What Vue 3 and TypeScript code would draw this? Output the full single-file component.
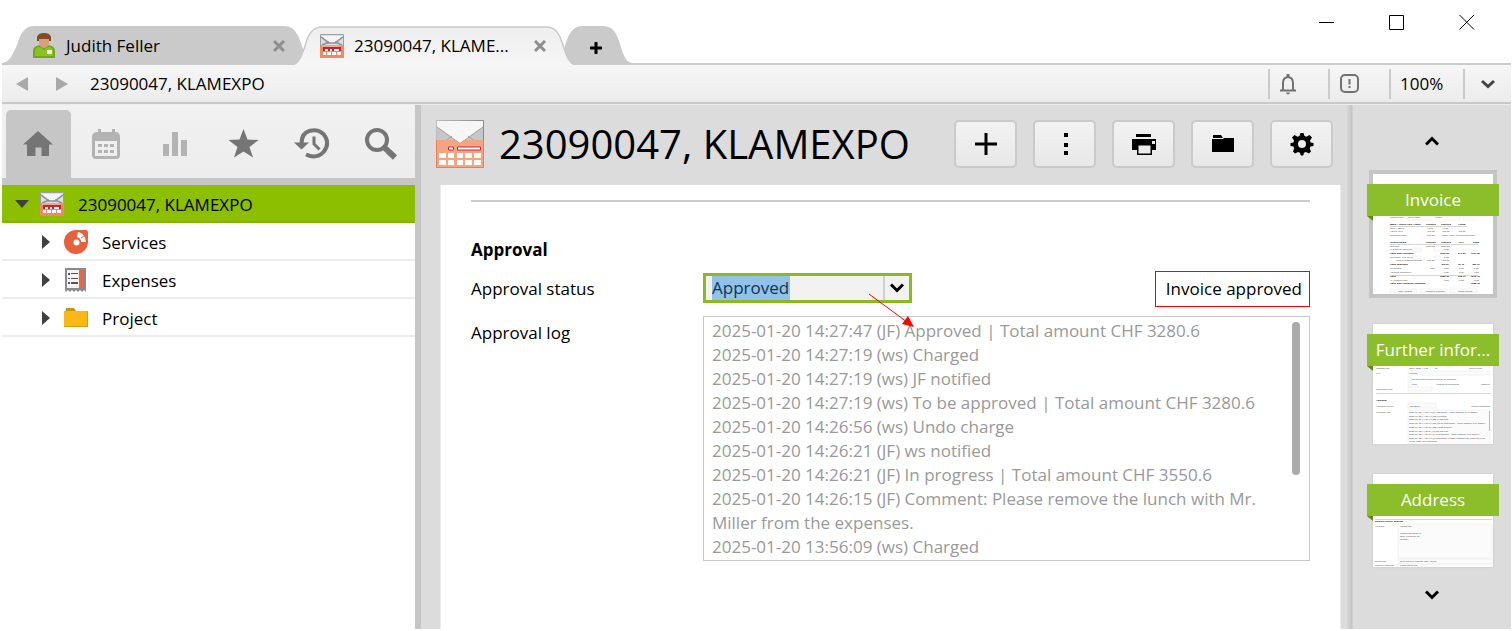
<script setup lang="ts">
import { ref } from 'vue'

interface NavTool { id: string; label: string; active?: boolean; faint?: boolean }
interface TreeItem { id: string; label: string }
interface Cell { x: number; y: number; t: string; b?: boolean }
interface Page { id: string; label: string; active?: boolean; height: number; cells: Cell[]; lines: number[][]; boxes: number[][] }

const record = '23090047, KLAMEXPO'
const status = ref('Approved')

const tools: NavTool[] = [
  { id: 'home', label: 'Home', active: true },
  { id: 'calendar', label: 'Calendar', faint: true },
  { id: 'chart', label: 'Reports', faint: true },
  { id: 'star', label: 'Favourites' },
  { id: 'history', label: 'History' },
  { id: 'search', label: 'Search' },
]

const tree: TreeItem[] = [
  { id: 'services', label: 'Services' },
  { id: 'expenses', label: 'Expenses' },
  { id: 'project', label: 'Project' },
]

const actions = [
  { id: 'add', label: 'Add' },
  { id: 'more', label: 'More' },
  { id: 'print', label: 'Print' },
  { id: 'folder', label: 'Folder' },
  { id: 'settings', label: 'Settings' },
]

const log = [
  '2025-01-20 14:27:47 (JF) Approved | Total amount CHF 3280.6',
  '2025-01-20 14:27:19 (ws) Charged',
  '2025-01-20 14:27:19 (ws) JF notified',
  '2025-01-20 14:27:19 (ws) To be approved | Total amount CHF 3280.6',
  '2025-01-20 14:26:56 (ws) Undo charge',
  '2025-01-20 14:26:21 (JF) ws notified',
  '2025-01-20 14:26:21 (JF) In progress | Total amount CHF 3550.6',
  '2025-01-20 14:26:15 (JF) Comment: Please remove the lunch with Mr. Miller from the expenses.',
  '2025-01-20 13:56:09 (ws) Charged',
]

const row = (y: number, label: string, values: [number, string][], b = false): Cell[] => [
  { x: 17, y, t: label, b },
  ...values.map(([x, t]) => ({ x, y, t, b })),
]

const pages: Page[] = [
  {
    id: 'invoice', label: 'Invoice', active: true, height: 120,
    cells: [
      ...row(44, 'Invoice date', [[35, '20.01.2025'], [62, 'Term 1']]),
      ...row(51, 'Basis / Hourly rate / costs', [[53, 'Planned'], [68, 'Charged'], [85, 'Actual']], true),
      ...row(55, 'Total / hours', [[54, '17.00'], [69, '17.00']]),
      ...row(58, 'Hourly rate', [[54, '180.00'], [69, '180.00'], [85, '180.00']]),
      ...row(62, 'Recorded costs', [[54, '270.00'], [69, 'Basis: 100% of recorded costs']]),
      ...row(69, 'Invoice totals', [[53, 'Planned'], [68, 'Charged'], [86, 'VAT'], [100, 'Total']], true),
      ...row(73, 'Services', [[53, '3060.00'], [68, '3060.00']]),
      ...row(76, '% Discount Services', [[71, '0.00']]),
      ...row(80, 'Total after discount', [[67, '3060.00'], [85, '247.86'], [98, '3307.86']], true),
      ...row(84, 'Expenses   Flat fee %', [[71, '0.00']]),
      ...row(87, '          Total expenses and fee', [[54, '270.00'], [69, '450.00']]),
      ...row(91, 'Total expenses', [[68, '450.00'], [85, '36.45'], [99, '486.45']], true),
      ...row(95, 'Purchases', [[57, '0.00'], [71, '0.00'], [86, '0.00'], [101, '0.00']]),
      ...row(99, 'Advance payments', [[71, '0.00'], [86, '0.00'], [101, '0.00']]),
      ...row(103, 'Total', [[67, '3280.60'], [85, '265.73'], [98, '3546.33']], true),
      ...row(107, '% Advance paid', [[71, '0.00'], [86, '0.00'], [101, '0.00']]),
      ...row(110, 'Total after advance (rounded)', [[98, '3280.60']], true),
      { x: 25, y: 118, t: 'Copy invoice' }, { x: 53, y: 118, t: 'Remove charged' }, { x: 85, y: 118, t: 'Undo charge' },
    ],
    lines: [[17, 52, 94], [17, 70, 105], [17, 101, 105]],
    boxes: [[34, 41, 24, 5], [73, 41, 14, 5], [90, 41, 14, 5], [61, 71, 14, 6], [40, 74, 8, 4], [40, 82, 8, 4], [61, 82, 14, 4], [17, 115, 27, 4], [47, 115, 27, 4], [77, 115, 27, 4]],
  },
  {
    id: 'further', label: 'Further infor...', height: 120,
    cells: [
      { x: 3, y: 45, t: 'Changed on' }, { x: 36, y: 45, t: '20.01.2025 14:28' }, { x: 62, y: 45, t: 'By' }, { x: 96, y: 45, t: 'Judith Feller' },
      { x: 3, y: 50, t: 'VAT' }, { x: 36, y: 50, t: 'Normal' },
      { x: 39, y: 56, t: 'Do not send invoice (cannot be booked)' },
      { x: 39, y: 61, t: 'Paid' }, { x: 63, y: 61, t: 'Amount outstanding' }, { x: 108, y: 61, t: '3280.60' },
      { x: 3, y: 66, t: 'Reminder level' },
      { x: 3, y: 77, t: 'Approval', b: true },
      { x: 3, y: 83, t: 'Approval status' }, { x: 36, y: 83, t: 'Approved' }, { x: 98, y: 83, t: 'Invoice approved' },
      { x: 3, y: 89, t: 'Approval log' },
      ...log.slice(0, 8).map((t, i) => ({ x: 36, y: 89 + Math.round(i * 3.7), t: t.split(' Miller')[0] })),
      { x: 36, y: 118, t: 'Miller from the expenses.' },
    ],
    lines: [[3, 69, 118]],
    boxes: [[35, 47, 82, 4], [35, 53, 4, 4], [35, 58, 4, 4], [35, 63, 24, 4], [35, 79, 28, 5], [35, 86, 82, 38]],
  },
  {
    id: 'address', label: 'Address', height: 93,
    cells: [
      { x: 2, y: 48, t: 'Default invoice address', b: true },
      { x: 2, y: 53, t: 'Address' }, { x: 27, y: 53, t: 'Klamexpo' },
      { x: 27, y: 60, t: 'Gewerbestrasse 15' }, { x: 27, y: 63, t: '8021 Neustadt ZH' }, { x: 27, y: 66, t: 'Schweiz' },
      { x: 2, y: 88, t: 'Salutation' }, { x: 27, y: 88, t: 'Sehr geehrte Damen und Herren' },
      { x: 2, y: 92, t: 'Contact Partners' }, { x: 27, y: 92, t: 'Finanzabteilung' },
    ],
    lines: [[2, 45, 119]],
    boxes: [[25, 50, 94, 34], [25, 85, 94, 5], [25, 90, 94, 5]],
  },
]
</script>

<template>
  <div class="app">
    <header class="tabstrip">
      <nav class="tabs" aria-label="Open tabs">
        <div class="tab tab-user">
          <svg class="tab-shape" viewBox="0 0 308 39" aria-hidden="true">
            <path fill="#cacaca" d="M0 37 C7 37 11 28 15 19 C18 9 22 0 32 0 H283 C294 0 298 13 302 26 C300 34 296 39 290 39 H0Z" />
          </svg>
          <svg class="user-icon" viewBox="0 0 24 26" aria-hidden="true">
            <path fill="#72a71d" d="M1 25v-7q0-5 7-6h8q7 1 7 6v7z" />
            <path fill="#8cc21f" d="M3 23v-4q0-5 5-5l4 3 4-3q5 0 5 5v4z" />
            <path fill="#d99f80" d="M7 4h10v7q-1 3-5 4-4-1-5-4z" />
            <path fill="#824c22" d="M5 8V4q1-4 7-4t7 4v4h-2V6H7v2z" />
            <path fill="#f5e9df" d="M15 17h5v4h-5z" />
          </svg>
          <a class="tab-label" href="#">Judith Feller</a>
          <button class="tab-close" aria-label="Close Judith Feller"><svg viewBox="0 0 12 12"><path d="M1 1l10 10M11 1L1 11" /></svg></button>
        </div>
        <div class="tab tab-record">
          <svg class="tab-shape" viewBox="0 0 288 39" aria-hidden="true">
            <defs><linearGradient id="tabfill" x2="0" y2="1"><stop stop-color="#eeeeee" /><stop offset="1" stop-color="#f6f6f6" /></linearGradient></defs>
            <path fill="url(#tabfill)" d="M2 39 C9 38 12 29 15 20 C18 9 22 1 32 1 H256 C267 1 270 10 273 19 C276 29 279 38 286 39Z" />
            <path fill="none" stroke="#c9c9c9" stroke-width="1.5" d="M2 39 C9 38 12 29 15 20 C18 9 22 1 32 1 H256 C267 1 270 10 273 19 C276 29 279 38 286 39" />
          </svg>
          <svg class="small-invoice" aria-hidden="true"><use href="#invoice-small" /></svg>
          <a class="tab-label" href="#">23090047, KLAME...</a>
          <button class="tab-close" aria-label="Close 23090047, KLAMEXPO"><svg viewBox="0 0 12 12"><path d="M1 1l10 10M11 1L1 11" /></svg></button>
        </div>
        <button class="tab-new" aria-label="New tab">
          <svg class="tab-shape" viewBox="0 0 68 39" aria-hidden="true">
            <path fill="#cacaca" d="M12 39 C5 37 3 31 0 24 C3 13 6 0 19 0 H39 C50 0 53 9 56 18 C59 28 62 37 68 37 V39Z" />
          </svg>
          <svg class="plus" viewBox="0 0 12 12" aria-hidden="true"><path d="M6 1v10M1 6h10" /></svg>
        </button>
      </nav>
      <div class="window-controls">
        <button aria-label="Minimize"><svg viewBox="0 0 16 16"><path d="M0 8.5h15" /></svg></button>
        <button aria-label="Maximize"><svg viewBox="0 0 16 16"><path d="M.5 1.5h14v14H.5z" /></svg></button>
        <button aria-label="Close"><svg viewBox="0 0 16 16"><path d="M.5 1l14.500 14.500M15 1L.5 15.500" /></svg></button>
      </div>
    </header>

    <div class="toolbar">
      <button class="step" aria-label="Back"><svg viewBox="0 0 12 14"><path d="M12 0v14L0 7z" /></svg></button>
      <button class="step" aria-label="Forward"><svg viewBox="0 0 12 14"><path d="M0 0v14l12-7z" /></svg></button>
      <span class="crumb">{{ record }}</span>
      <div class="toolbar-right">
        <button class="bell" aria-label="Notifications">
          <svg viewBox="0 0 20 22"><path d="M5 17V10q0-5.500 5-6 5 .5 5 6v7M2 17.500h16" /><path class="solid" d="M8.500 1h3v3h-3zM8 19.500h4q-.5 2-2 2t-2-2z" /></svg>
        </button>
        <button class="alert" aria-label="Messages">
          <svg viewBox="0 0 20 20"><rect x="1" y="1" width="17" height="17" rx="4" /><path d="M9.500 5v5.500M9.500 12v2" /></svg>
        </button>
        <button class="zoom">100%</button>
        <button class="drop" aria-label="More options"><svg viewBox="0 0 14 10"><path d="M1 2l6 5.500L13 2" /></svg></button>
      </div>
    </div>

    <div class="body">
      <aside class="sidebar">
        <nav class="tools" aria-label="Views">
          <button v-for="t in tools" :key="t.id" :class="{ active: t.active, faint: t.faint }" :aria-label="t.label">
            <svg viewBox="0 0 36 32">
              <path v-if="t.id === 'home'" d="M18 3l15 13.500h-4V28h-7.500v-8.500h-6V28H7V16.500H3z" />
              <template v-else-if="t.id === 'calendar'">
                <path fill-rule="evenodd" d="M9 1h3v3h11V1h3v3q5 0 5 5v18q0 4-4 4H7q-4 0-4-4V9q0-5 6-5zM6 13v15h22V13z" />
                <path d="M9 16h4v3H9zm6 0h4v3h-4zm6 0h4v3h-4zM9 22h4v3H9zm6 0h4v3h-4zm6 0h4v3h-4z" />
              </template>
              <path v-else-if="t.id === 'chart'" d="M6 16h6v12H6zm9-12h6v24h-6zm9 8h6v16h-6z" />
              <path v-else-if="t.id === 'star'" d="M17.500 1l4 10.500 11 .5-9 7L27 29.500l-9.500-6L8 29.500 11.500 19l-9-7 11-.5z" />
              <template v-else-if="t.id === 'history'">
                <path class="line thick" d="M7.500 15.500Q7.500 5 16 2.800 26.500.5 31.500 9q4 8-2 15-7 7.500-17.500 2.500" />
                <path d="M0 14.500h15l-7.500 7z" /><path class="line" d="M20 8.500V16l5.500 5.500" />
              </template>
              <template v-else>
                <circle class="line thick" cx="14" cy="12" r="10" /><path class="handle" d="M22 20l3 3M25 23l7 6.500" />
              </template>
            </svg>
          </button>
        </nav>
        <ul class="tree">
          <li>
            <a class="node root" href="#">
              <svg class="caret down" viewBox="0 0 14 8" aria-hidden="true"><path d="M0 0h14L7 8z" /></svg>
              <svg class="small-invoice" viewBox="0 0 24 24" aria-hidden="true">
                <g id="invoice-small">
                  <path fill="#dcdee1" d="M0 0h24v12H0z" /><path fill="#f5f5f6" d="M2 2h20L12 10z" />
                  <path fill="none" stroke="#999fa2" d="M.5 11V.5h23V11" />
                  <path fill="none" stroke="#8b9294" stroke-width="1.500" d="M1 3l8 6h6l8-6M2 11l7-3M22 11l-7-3" />
                  <path fill="#ef8863" d="M0 11h24v13H0z" /><path fill="#f6a585" d="M2 11h20l-3 2H2z" />
                  <path fill="#c92331" d="M3 13h18v4h-2v-2h-5v2h-2v-2h-2v2H8v-2H5v2H3z" />
                  <path fill="#fff" d="M5 15h3v2H5zm5 0h2v2h-2zm4 0h5v2h-5zM3 18h3v3H3zm4 0h4v3H7zm5 0h4v3h-4zm5 0h4v3h-4z" />
                </g>
              </svg>
              <span>{{ record }}</span>
            </a>
          </li>
          <li v-for="n in tree" :key="n.id">
            <a class="node" href="#">
              <svg class="caret" viewBox="0 0 8 14" aria-hidden="true"><path d="M0 0v14l8-7z" /></svg>
              <svg class="tree-icon" viewBox="0 0 24 24" aria-hidden="true">
                <template v-if="n.id === 'services'">
                  <circle cx="12" cy="12" r="12" fill="#e5623d" />
                  <path fill="#e5623d" d="M13 0h9q2 0 2 3v10H13z" />
                  <path fill="#fff" d="M14 2q7 1 8 10h-5q0-4-4-5z" />
                  <path fill="none" stroke="#e5623d" d="M17 8l4-3" />
                  <circle cx="12.500" cy="12.500" r="3" fill="#fff" />
                </template>
                <template v-else-if="n.id === 'expenses'">
                  <path fill="#8a8a8a" d="M1 0h21v24l-2-2-2 2-2-2-2 2-2-2-2 2-2-2-2 2-2-2-2 2-1-2z" />
                  <path fill="#f4f4f4" d="M3 2h12v18H3z" /><path fill="#ea6745" d="M15 1h5v19h-5z" />
                  <path fill="#555" d="M4 5h2v2H4zm3 0h7v1H7zm-3 5h2v1H4zm3 0h7v1H7zm-3 4h2v2H4zm3 0h7v2H7z" />
                </template>
                <template v-else>
                  <path fill="#c99512" d="M2 2h8l2 3v3H1z" /><path fill="#fbb815" d="M0 5h24v16H0z" />
                  <path fill="#d69c12" d="M0 20h24v1H0zM23 5h1v16h-1z" />
                </template>
              </svg>
              <span>{{ n.label }}</span>
            </a>
          </li>
        </ul>
      </aside>

      <main class="main">
        <div class="heading">
          <svg class="invoice-large" viewBox="0 0 48 48" aria-hidden="true">
            <defs><linearGradient id="rim"><stop stop-color="#b9bbbc" /><stop offset="1" stop-color="#888b8d" /></linearGradient></defs>
            <path fill="#c5c7c9" d="M0 0h48v21H0z" /><path fill="#f6f6f6" d="M1 1h46v6L24 23.500 1 7z" />
            <path fill="none" stroke="#9d9fa1" d="M1 7l23 16.500L47 7M16 16l-6 5M32 16l6 5" />
            <path fill="#f5a482" d="M0 20h19.500l4.500 3.500 4.500-3.500H48v28H0z" />
            <path fill="none" stroke="url(#rim)" d="M.5 20V.5h47V20" />
            <path fill="none" stroke="#ed7f58" d="M.5 20v27.500h47V20" />
            <path fill="#fff" stroke="#d62338" d="M12.500 27h5v3h-5zM21.500 27h23v3h-23z" />
            <path fill="#fff" d="M3 33h7v5H3zm9 0h6v5h-6zm9 0h6v5h-6zm8 0h7v5h-7zm9 0h7v5h-7zM3 40h7v5H3zm9 0h6v5h-6zm9 0h6v5h-6zm8 0h7v5h-7zm9 0h7v5h-7z" />
          </svg>
          <h1>{{ record }}</h1>
          <div class="actions">
            <button v-for="a in actions" :key="a.id" :aria-label="a.label">
              <svg viewBox="0 0 24 24">
                <path v-if="a.id === 'add'" d="M10.500 1h3v9.500H23v3h-9.500V23h-3v-9.500H1v-3h9.500z" />
                <path v-else-if="a.id === 'more'" d="M11 1h4v4h-4zm0 10h4v4h-4zm0 8h4v4h-4z" />
                <path v-else-if="a.id === 'print'" fill-rule="evenodd" d="M4 2h15v3H4zM0 7h24v11h-4v5H5v-5H0zm20 2v3h3V9zM6.500 13.500v8h12v-8z" />
                <path v-else-if="a.id === 'folder'" d="M2 3h8l2 3H2zM1 7h11l1-1h10v14H1z" />
                <path v-else fill-rule="evenodd" d="M10.500 1h3l1 3 2 .8L19.500 3 22 5.500 20 8.500l.5 2 3 .5v3l-3 .5-.7 2L21 19.500 19 21.500l-3-1.500-2 .8-.8 2.700h-2.400L10 20.800 8 20l-3 1.500L3 19.500l1.200-3-.7-2-3-.5v-3l3-.5.5-2L2 5.500 4.500 3l3 1.800 2-.8zM12 8a4 4 0 100 8 4 4 0 000-8z" />
              </svg>
            </button>
          </div>
        </div>

        <form class="panel" @submit.prevent>
          <hr />
          <h2>Approval</h2>
          <div class="field">
            <label for="status">Approval status</label>
            <div class="status-row">
              <div class="combo">
                <select id="status" v-model="status">
                  <option>Approved</option>
                  <option>In progress</option>
                  <option>To be approved</option>
                </select>
                <span class="combo-arrow"><svg viewBox="0 0 14 10" aria-hidden="true"><path d="M1 1.500l6 6 6-6" /></svg></span>
                <svg class="pointer" viewBox="0 0 48 36" aria-hidden="true">
                  <path d="M1 1l38 28" fill="none" stroke="#f00" /><path d="M46 34L34 31l6-8z" fill="#f00" />
                </svg>
              </div>
              <output for="status">Invoice approved</output>
            </div>
          </div>
          <div class="field log-field">
            <label for="log">Approval log</label>
            <div class="log">
              <textarea id="log" readonly :value="log.join('\n')"></textarea>
              <span class="thumb"></span>
            </div>
          </div>
        </form>
      </main>

      <nav class="pages" aria-label="Pages">
        <button class="scroll" aria-label="Scroll up"><svg viewBox="0 0 14 10"><path d="M1 8.500l6-6 6 6" /></svg></button>
        <a v-for="p in pages" :key="p.id" href="#" class="page" :class="{ current: p.active }">
          <svg class="preview" :viewBox="`0 0 120 ${p.height}`" aria-hidden="true">
            <g fill="#fbfbfb" stroke="#e6e6e6" stroke-width=".5">
              <rect v-for="(b, i) in p.boxes" :key="i" :x="b[0]" :y="b[1]" :width="b[2]" :height="b[3]" />
            </g>
            <path v-for="(l, i) in p.lines" :key="i" :d="`M${l[0]} ${l[1]}.5H${l[2]}`" stroke="#d5d5d5" />
            <path v-if="p.id === 'further'" d="M116.500 87v20" stroke="#bbb" />
            <text v-for="(c, i) in p.cells" :key="i" :x="c.x" :y="c.y" :class="{ strong: c.b }">{{ c.t }}</text>
          </svg>
          <span class="ribbon">{{ p.label }}</span>
        </a>
        <button class="scroll end" aria-label="Scroll down"><svg viewBox="0 0 14 10"><path d="M1 1.500l6 6 6-6" /></svg></button>
      </nav>
    </div>
  </div>
</template>

<style>
body { margin: 0; background: #fff; }
</style>

<style scoped>
.app {
  box-sizing: border-box;
  display: flex;
  flex-direction: column;
  min-height: 100vh;
  padding: 0 1px 2px 2px;
  font-family: "Open Sans", "Noto Sans", sans-serif;
  font-size: 17px;
  line-height: 24px;
  color: #000;
}
button { padding: 0; border: 0; background: none; font: inherit; color: inherit; }
a { color: inherit; text-decoration: none; }
svg { display: block; flex: none; }

.tabstrip {
  display: flex;
  justify-content: space-between;
  align-items: flex-end;
  height: 65px;
  background: linear-gradient(#cacaca, #cacaca) bottom / 100% 2px no-repeat #fff;
}
.tabs { display: flex; height: 39px; }
.tab, .tab-new { position: relative; display: flex; align-items: center; height: 39px; box-sizing: border-box; }
.tab > *, .tab-new > * { position: relative; }
.tab > .tab-shape, .tab-new > .tab-shape { position: absolute; left: 0; top: 0; width: 100%; height: 39px; }
.tab-user { width: 308px; padding: 0 25px 0 30px; }
.tab-record { width: 288px; margin-left: -20px; padding: 0 32px 0 30px; z-index: 1; }
.tab-new { width: 68px; margin-left: -14px; }
.user-icon { width: 24px; height: 26px; margin-right: 10px; }
.small-invoice { width: 24px; height: 24px; }
.tab-record .small-invoice { margin-right: 10px; }
.tab-label { flex: 1; white-space: nowrap; }
.tab-close svg { width: 12px; height: 12px; fill: none; stroke: #8e8e8e; stroke-width: 3; }
.plus { width: 12px; height: 12px; margin: 4px 0 0 26px; fill: none; stroke: #000; stroke-width: 3; stroke-linecap: round; }
.window-controls { display: flex; align-self: flex-start; gap: 54px; padding: 14px 36px 0 0; }
.window-controls svg { width: 16px; height: 16px; fill: none; stroke: #000; }

.toolbar {
  display: flex;
  align-items: center;
  height: 37px;
  background: linear-gradient(#f6f6f6, #ececec);
  border-bottom: 2px solid #c8c8c8;
}
.step { margin-left: 14px; }
.step + .step { margin-left: 28px; }
.step svg { width: 12px; height: 14px; fill: #a9a9a9; }
.crumb { flex: 1; margin-left: 22px; }
.toolbar-right { display: flex; height: 30px; }
.toolbar-right button { display: flex; align-items: center; box-sizing: border-box; border-left: 2px solid #cbcbcb; }
.toolbar-right svg { fill: none; stroke: #727272; stroke-width: 2; }
.bell { width: 60px; padding-left: 8px; }
.bell svg { width: 20px; height: 22px; }
.bell .solid { fill: #727272; stroke: none; }
.alert { width: 61px; padding-left: 10px; }
.alert svg { width: 20px; height: 20px; }
.zoom { width: 74px; padding-left: 9px; }
.drop { width: 48px; padding-left: 16px; }
.drop svg { width: 14px; height: 10px; stroke: #444; stroke-width: 3; }

.body { flex: 1; display: flex; border-top: 1px solid #ededed; }
.sidebar { flex: none; width: 413px; border-right: 6px solid #c6c6c6; background: #fff; }
.tools {
  display: grid;
  grid-template-columns: repeat(6, 1fr);
  height: 73px;
  padding-left: 2px;
  background: linear-gradient(#f1f1f1, #ededed);
  border-bottom: 7px solid #c6c6c6;
}
.tools button { display: flex; align-items: center; justify-content: center; margin: 5px 2px 0; }
.tools .active { background: #c6c6c6; border-radius: 5px 5px 0 0; }
.tools svg { width: 36px; height: 32px; fill: #757575; }
.tools .faint svg { fill: #b3b3b3; }
.tools .line { fill: none; stroke: #757575; stroke-width: 3; }
.tools .thick { stroke-width: 4; }
.tools .handle { fill: none; stroke: #757575; stroke-width: 6; }
.tree { list-style: none; margin: 0; padding: 0; }
.node { display: flex; align-items: center; box-sizing: border-box; height: 38px; padding: 2px 0 0 40px; border-bottom: 2px solid #ededed; }
.node span { padding-top: 2px; }
.root { padding-left: 13px; background: #8cbf00; border-bottom-color: #82b400; }
.caret { width: 8px; height: 14px; fill: #404040; }
.caret.down { width: 14px; height: 8px; }
.tree-icon { width: 24px; height: 24px; margin: 0 14px; }
.root .small-invoice { margin: 0 14px 0 11px; }

.main { flex: 1; min-width: 0; display: flex; flex-direction: column; padding: 0 5px 0 19px; background: #dcdcdc; }
.heading { display: flex; align-items: center; height: 78px; margin: 0 0 2px -4px; }
.invoice-large { width: 48px; height: 48px; }
h1 { flex: 1; margin: 0 0 0 15px; font-size: 40px; line-height: 48px; font-weight: 400; white-space: nowrap; }
.actions { display: flex; gap: 16px; margin-right: 8px; }
.actions button {
  display: grid;
  place-items: center;
  box-sizing: border-box;
  width: 63px;
  height: 48px;
  border: 2px solid #cacaca;
  border-radius: 5px;
  background: linear-gradient(#f2f2f2, #e8e8e8);
}
.actions svg { width: 24px; height: 24px; }
.panel { flex: 1; padding: 15px 30px 0; background: #fff; border: 1px solid #ececec; border-width: 0 1px; }
hr { height: 2px; margin: 0; border: 0; background: #cbcbcb; }
h2 { margin: 36px 0 9px; font-size: 17px; line-height: 24px; font-weight: 700; }
.field { display: grid; grid-template-columns: 232px minmax(0, 1fr); align-items: center; }
.status-row { display: flex; justify-content: space-between; align-items: center; }
.combo { position: relative; width: 209px; height: 30px; margin-bottom: 2px; box-sizing: border-box; border: 3px solid #8cb91c; background: #f2f2f2; }
select {
  appearance: none;
  box-sizing: border-box;
  width: 100%;
  height: 24px;
  padding: 0 0 0 6px;
  border: 0;
  border-radius: 0;
  outline: 0;
  background: linear-gradient(#92c1e9, #92c1e9) 6px 0 / 78px 24px no-repeat #f2f2f2;
  font: inherit;
  color: #0b3656;
}
.combo-arrow {
  position: absolute;
  top: 0;
  right: 0;
  display: grid;
  place-items: center;
  width: 24px;
  height: 24px;
  border-left: 2px solid #d0d0d0;
  background: #f2f2f2;
  pointer-events: none;
}
.combo-arrow svg, .scroll svg { width: 14px; height: 10px; fill: none; stroke: #000; stroke-width: 3; }
.pointer { position: absolute; left: 162px; top: 17px; z-index: 1; width: 48px; height: 36px; pointer-events: none; }
output { box-sizing: border-box; height: 36px; padding: 5px 7px 5px 10px; border: 1px solid #f00; white-space: nowrap; }
.log-field { align-items: start; margin-top: 9px; }
.log-field label { padding-top: 5px; }
.log { position: relative; }
textarea {
  display: block;
  box-sizing: border-box;
  width: 100%;
  height: 245px;
  padding: 2px 36px 0 8px;
  border: 1px solid #c8c8c8;
  outline: 0;
  resize: none;
  overflow: hidden;
  font: inherit;
  color: #999;
}
.thumb { position: absolute; right: 10px; top: 6px; width: 8px; height: 153px; border-radius: 4px; background: #ababab; }

.pages {
  flex: none;
  box-sizing: border-box;
  width: 165px;
  padding-left: 27px;
  background: linear-gradient(90deg, #dcdcdc, #c4c4c4 6px, #dcdcdc 7px);
}
.scroll { display: block; margin: 31px 0 28px 52px; }
.scroll.end { margin: 23px 0 0 52px; }
.page { position: relative; display: block; width: 120px; margin-bottom: 30px; background: #fff; box-shadow: 0 0 2px #c4c4c4; }
.page:last-of-type { margin-bottom: 0; }
.current { box-shadow: 0 0 0 4px #c4c4c4; }
.preview { width: 100%; font-size: 2.4px; }
.preview text { fill: #444; white-space: pre; }
.preview .strong { font-weight: 700; fill: #111; }
.ribbon {
  position: absolute;
  left: -6px;
  right: -6px;
  top: 10px;
  height: 32px;
  background: #8cbd2a;
  color: #fff;
  line-height: 32px;
  text-align: center;
  white-space: nowrap;
}
.ribbon::after {
  content: "";
  position: absolute;
  left: 0;
  top: 32px;
  border-top: 5px solid #5f8712;
  border-left: 6px solid transparent;
}
</style>
